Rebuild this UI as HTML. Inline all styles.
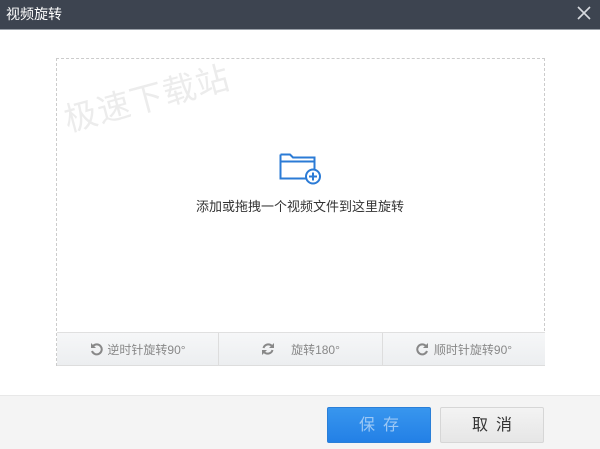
<!DOCTYPE html>
<html><head><meta charset="utf-8"><style>
*{margin:0;padding:0;box-sizing:border-box}
body{width:600px;height:449px;overflow:hidden;background:#fff;font-family:"Liberation Sans","Noto Sans CJK SC",sans-serif;position:relative}
.title{position:absolute;left:0;top:0;width:600px;height:30px;background:#3d4450;color:#fff;font-size:14px;line-height:28px;padding-left:6px;border-bottom:1px solid #9aa0a8}
.close{position:absolute;right:8px;top:5px}
.box{position:absolute;left:56px;top:58px;width:489px;height:308px;border:1px dashed #ccc}
.wm{position:absolute;left:58px;top:95px;font-size:33px;color:#ececec;transform:rotate(-15deg);transform-origin:left top;letter-spacing:1px}
.txt{position:absolute;left:0;width:600px;top:196px;text-align:center;font-size:13px;color:#333}
.bar{position:absolute;left:57px;top:332px;width:488px;height:34px;background:linear-gradient(#f6f7f8,#eceef0);border-top:1px solid #e0e0e0;border-bottom:1px solid #ddd;display:flex}
.bar div{height:100%;display:flex;align-items:center;justify-content:center;font-size:12px;color:#888;border-right:1px solid #ddd}
.bar div:last-child{border-right:none}
.foot{position:absolute;left:0;top:395px;width:600px;height:54px;background:#f4f4f4;border-top:1px solid #e8e8e8}
.btn{position:absolute;top:407px;height:36px;width:104px;font-size:16px;text-align:center;line-height:36px;letter-spacing:8px;padding-left:8px;border-radius:2px}
</style></head><body>
<div class="title">视频旋转
<svg class="close" width="16" height="16" viewBox="0 0 16 16"><path d="M2 2L14 14M14 2L2 14" stroke="#d8dbe0" stroke-width="1.6"/></svg></div>
<div class="box"></div>
<div class="wm">极速下载站</div>
<svg style="position:absolute;left:279px;top:152px" width="44" height="34" viewBox="0 0 44 34">
<path d="M1.5 2.5H11l3 3h21.5V18M30 26.5H1.5V2.5M1.5 9.5H35.5" fill="none" stroke="#2b7bd6" stroke-width="2"/>
<circle cx="34" cy="24.5" r="7" fill="#fff" stroke="#2b7bd6" stroke-width="2"/>
<path d="M34 20.5v8M30 24.5h8" stroke="#2b7bd6" stroke-width="2"/></svg>
<div class="txt">添加或拖拽一个视频文件到这里旋转</div>
<div class="bar">
<div style="width:162px"><svg width="14" height="14" viewBox="0 0 14 14" style="margin-right:4px"><path d="M4 4A5 5 0 1 1 3 9" fill="none" stroke="#888" stroke-width="2"/><path d="M2 1v5h5z" fill="#888"/></svg>逆时针旋转90°</div>
<div style="width:164px"><svg width="14" height="14" viewBox="0 0 14 14" style="margin-right:16px"><path d="M2.5 6A5 5 0 0 1 11 4M11.5 8A5 5 0 0 1 3 10" fill="none" stroke="#888" stroke-width="2"/><path d="M13 1v5H8zM1 13V8h5z" fill="#888"/></svg>旋转180°</div>
<div style="width:162px"><svg width="14" height="14" viewBox="0 0 14 14" style="margin-right:4px"><path d="M10 4A5 5 0 1 0 11 9" fill="none" stroke="#888" stroke-width="2"/><path d="M12 1v5H7z" fill="#888"/></svg>顺时针旋转90°</div>
</div>
<div class="foot"></div>
<div class="btn" style="left:327px;background:linear-gradient(#3896ee,#2380e6);color:#9cc8f5;border:1px solid #2a7fd8">保存</div>
<div class="btn" style="left:440px;background:linear-gradient(#f3f3f3,#e6e6e6);color:#333;border:1px solid #d6d6d6">取消</div>
</body></html>
